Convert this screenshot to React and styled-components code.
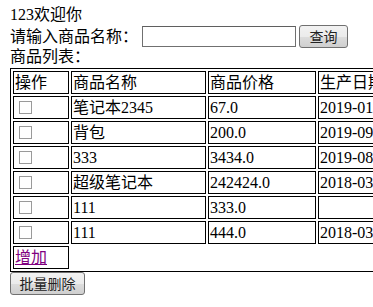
import React from 'react';
import styled, { createGlobalStyle } from 'styled-components';

const GlobalStyle = createGlobalStyle`
    html, body {
        margin: 0;
        background: #fff;
    }
    body {
        padding: 5px 10px 0 10px;
        font-family: 'Liberation Serif', 'Noto Sans CJK SC', serif;
        font-size: 16px;
        color: #000;
        overflow: hidden;
        white-space: nowrap;
    }
`;

const Page = styled.div`
    display: flex;
    flex-direction: column;
    align-items: flex-start;
`;

const TextLine = styled.div`
    height: 19px;
    line-height: 19px;
`;

const SearchRow = styled.div`
    display: flex;
    align-items: center;
    height: 22px;
    margin-top: 1px;
    line-height: 19px;
`;

const SearchInput = styled.input`
    box-sizing: border-box;
    width: 154px;
    height: 21px;
    margin: 0 3px 0 4px;
    padding: 0 2px;
    border: 1px solid #707070;
    border-top-color: #5f5f5f;
    background: #fff;
    font-size: 14px;
    outline: none;
`;

const Button = styled.button`
    box-sizing: border-box;
    display: block;
    width: ${p => p.$width}px;
    height: 23px;
    padding: 0;
    border: 1px solid #707070;
    border-radius: 3px;
    background: linear-gradient(#f2f2f2 0%, #ebebeb 50%, #dddddd 51%, #cfcfcf 100%);
    font-family: 'Noto Sans CJK SC', sans-serif;
    font-size: 14px;
    line-height: 19px;
    color: #222;
`;

const Table = styled.table`
    flex-shrink: 0;
    width: 421px;
    table-layout: fixed;
    margin-top: 2px;
    border: 1px solid #000;
    border-collapse: separate;
    border-spacing: 2px;
`;

const Cell = styled.td`
    box-sizing: border-box;
    width: ${p => p.$width ? `${p.$width}px` : 'auto'};
    height: 23px;
    padding: 1px;
    border: 1px solid #000;
    line-height: 19px;
    text-align: left;
    vertical-align: middle;
    font-weight: normal;
    overflow: hidden;
`;

const Check = styled.input`
    appearance: none;
    display: block;
    width: 13px;
    height: 13px;
    margin: 0 0 0 4px;
    border: 1px solid #9a9a9a;
    background: #fff;
`;

const AddLink = styled.a`
    color: #800080;
    text-decoration: underline;
`;

const Footer = styled.div`
    display: flex;
    margin-top: 0;
`;

const goods = [
    { name: '笔记本2345', price: '67.0', date: '2019-01-15' },
    { name: '背包', price: '200.0', date: '2019-09-12' },
    { name: '333', price: '3434.0', date: '2019-08-07' },
    { name: '超级笔记本', price: '242424.0', date: '2018-03-21' },
    { name: '111', price: '333.0', date: '' },
    { name: '111', price: '444.0', date: '2018-03-08' },
];

const App = () => (
    <Page>
        <GlobalStyle />
        <TextLine>123欢迎你</TextLine>
        <SearchRow>
            请输入商品名称：
            <SearchInput type="text" />
            <Button $width={49}>查询</Button>
        </SearchRow>
        <TextLine>商品列表：</TextLine>
        <Table>
            <tbody>
                <tr>
                    <Cell as="th" $width={56}>操作</Cell>
                    <Cell as="th" $width={135}>商品名称</Cell>
                    <Cell as="th" $width={108}>商品价格</Cell>
                    <Cell as="th" $width={110}>生产日期</Cell>
                </tr>
                {goods.map((g, i) => (
                    <tr key={i}>
                        <Cell><Check type="checkbox" /></Cell>
                        <Cell>{g.name}</Cell>
                        <Cell>{g.price}</Cell>
                        <Cell>{g.date}</Cell>
                    </tr>
                ))}
                <tr>
                    <Cell><AddLink href="#">增加</AddLink></Cell>
                </tr>
            </tbody>
        </Table>
        <Footer>
            <Button $width={75}>批量删除</Button>
        </Footer>
    </Page>
);

export default App;
